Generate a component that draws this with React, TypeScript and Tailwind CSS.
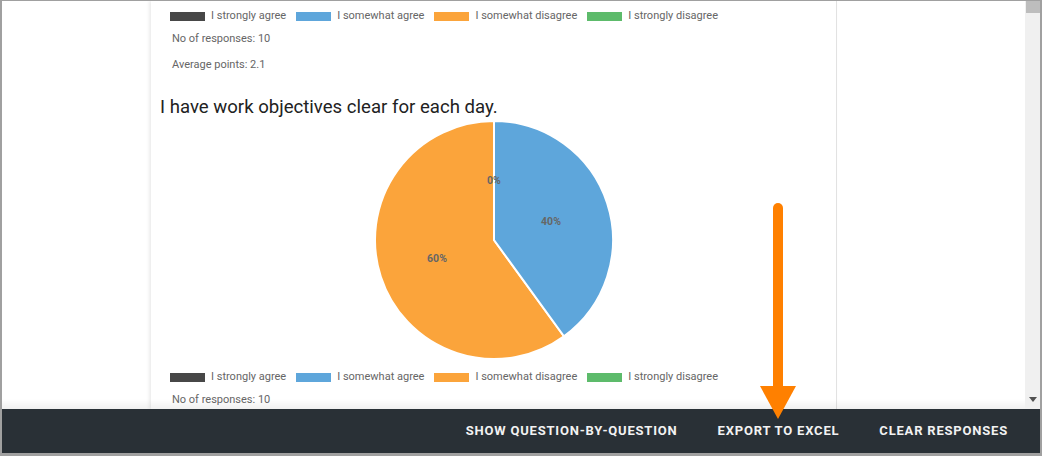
import React from "react"

const legend = [
  { label: "I strongly agree", color: "bg-[#474747]" },
  { label: "I somewhat agree", color: "bg-[#5ea6db]" },
  { label: "I somewhat disagree", color: "bg-[#fba43b]" },
  { label: "I strongly disagree", color: "bg-[#5dbb6b]" },
]

const Legend: React.FC = () => (
  <div className="flex items-center gap-[10px] h-[14px]">
    {legend.map((item) => (
      <div key={item.label} className="flex items-center gap-[6px]">
        <span className={`block w-[35px] h-[9px] ${item.color}`} />
        <span className="text-[11px] leading-[14px] text-[#666]">{item.label}</span>
      </div>
    ))}
  </div>
)

const Pie: React.FC = () => (
  <svg width="240" height="240" viewBox="0 0 240 240" className="block">
    <path d="M120,120 L189.95,216.27 A119,119 0 1 1 120,1 Z" fill="#fba43b" stroke="#fff" strokeWidth="2" />
    <path d="M120,120 L120,1 A119,119 0 0 1 189.95,216.27 Z" fill="#5ea6db" stroke="#fff" strokeWidth="2" />
    <g fontFamily="Roboto, Arial, sans-serif" fontSize="10.5" fontWeight="700" fill="#666" textAnchor="middle">
      <text x="120" y="64">0%</text>
      <text x="177" y="105">40%</text>
      <text x="63" y="142">60%</text>
    </g>
  </svg>
)

export default function App() {
  return (
    <div
      className="relative w-[1042px] h-[456px] flex flex-col overflow-hidden bg-white border-t border-l-2 border-r-2 border-b-[3px] border-[#a0a0a0]"
      style={{ fontFamily: "Roboto, 'Liberation Sans', Arial, sans-serif" }}
    >
      <div className="flex flex-1 min-h-0">
        <div className="relative flex-1 min-w-0 overflow-hidden">
          <div className="ml-[149px] w-[686px] h-full bg-white border-r border-[#e2e2e2] shadow-[-2px_0_3px_rgba(0,0,0,0.08)] pl-[19px]">
            <div className="pt-[8px]">
              <Legend />
            </div>
            <p className="mt-[9px] ml-[2px] text-[11px] leading-[14px] text-[#666]">No of responses: 10</p>
            <p className="mt-[12px] ml-[2px] text-[11px] leading-[14px] text-[#666]">Average points: 2.1</p>
            <h2 className="mt-[24px] -ml-[10px] text-[18.6px] leading-[22px] text-[#222]">
              I have work objectives clear for each day.
            </h2>
            <div className="flex justify-center -ml-[19px] mt-[2px]">
              <Pie />
            </div>
            <div className="mt-[10px]">
              <Legend />
            </div>
            <p className="mt-[9px] ml-[2px] text-[11px] leading-[14px] text-[#666]">No of responses: 10</p>
          </div>
          <div className="absolute left-0 right-0 bottom-0 h-[10px] bg-gradient-to-b from-transparent to-[#0000000f]" />
        </div>
        <div className="relative w-[15px] bg-[#f0f0f0]">
          <div className="ml-[1px] w-[14px] h-[12px] bg-[#bdbdbd]" />
          <svg className="absolute left-[4px] bottom-[7px]" width="8" height="5" viewBox="0 0 8 5">
            <path d="M0,0 L8,0 L4,5 Z" fill="#505050" />
          </svg>
        </div>
      </div>
      <div className="h-[44px] bg-[#293036] flex items-center justify-end pr-[12px]">
        {["SHOW QUESTION-BY-QUESTION", "EXPORT TO EXCEL", "CLEAR RESPONSES"].map((label) => (
          <button
            key={label}
            className="px-[20px] text-[13px] font-bold tracking-[0.8px] text-[#f2f2f2] leading-[16px]"
          >
            {label}
          </button>
        ))}
      </div>
      <svg className="absolute left-[756px] top-[199px]" width="40" height="222" viewBox="0 0 40 222">
        <line x1="20" y1="8" x2="20" y2="192" stroke="#ff8000" strokeWidth="10" strokeLinecap="round" />
        <path d="M2,186 L38,186 L20,219 Z" fill="#ff8000" />
      </svg>
    </div>
  )
}
